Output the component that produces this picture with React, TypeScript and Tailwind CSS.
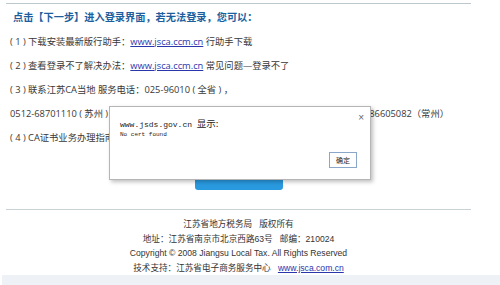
import React from "react";

const body = "font-['Open_Sans','Noto_Sans_CJK_SC',sans-serif]";
const foot = "font-['Liberation_Sans','Noto_Sans_CJK_SC',sans-serif]";

const Link = ({ children }: { children: React.ReactNode }) => (
  <span className="text-[#2b36ad] underline underline-offset-1">{children}</span>
);

const App: React.FC = () => {
  return (
    <div className={`relative w-[500px] h-[285px] overflow-hidden bg-white text-[#383838] ${body}`}>
      {/* Main content */}
      <div className="ml-[6px] mt-[3px] w-[465px] border-t border-[#bcc8cd]">
        <div className="pl-[7px] h-[26px] leading-[26px] text-[10.2px] font-bold text-[#1d5f9e]">
          点击【下一步】进入登录界面，若无法登录，您可以：
        </div>

        <div className="pl-[4px] text-[9.3px] leading-[24px] flex flex-col">
          <div className="h-[24px]">
            ( 1 ) 下载安装最新版行助手：<Link>www.jsca.ccm.cn</Link> 行助手下载
          </div>
          <div className="h-[24px]">
            ( 2 ) 查看登录不了解决办法：<Link>www.jsca.ccm.cn</Link> 常见问题—登录不了
          </div>
          <div className="h-[24px]">( 3 ) 联系江苏CA当地 服务电话：025-96010 ( 全省 ) ，</div>
          <div className="h-[24px] w-[439px] flex justify-between whitespace-nowrap">
            <span>0512-68701110 ( 苏州 )</span>
            <span>0510-82750876 ( 无锡 )&nbsp;&nbsp;0519-86605082（常州）</span>
          </div>
          <div className="h-[24px]">( 4 ) CA证书业务办理指南</div>
        </div>

        {/* Next button (mostly hidden by dialog) */}
        <div className="flex justify-center pt-[18px]">
          <div className="w-[88px] h-[22px] rounded-[3px] bg-[#2a9ae0]"></div>
        </div>

        <div className="mt-[19px] border-t border-[#c9d2d6]"></div>

        {/* Footer */}
        <div className={`pt-[7px] flex flex-col items-center text-[8.6px] leading-[14.6px] text-[#333] ${foot}`}>
          <div>江苏省地方税务局&nbsp;&nbsp;&nbsp;版权所有</div>
          <div>地址：江苏省南京市北京西路63号&nbsp;&nbsp;&nbsp;邮编：210024</div>
          <div>Copyright © 2008 Jiangsu Local Tax. All Rights Reserved</div>
          <div>
            技术支持：江苏省电子商务服务中心&nbsp;&nbsp;&nbsp;<Link>www.jsca.com.cn</Link>
          </div>
        </div>
      </div>

      <div className="absolute left-[2px] right-0 top-[275px] h-[10px] bg-[#eef2f6]"></div>

      {/* Alert dialog */}
      <div className="absolute left-[109px] top-[106px] w-[262px] h-[74px] bg-white border border-[#b5b5b5] shadow-[2px_2px_4px_rgba(0,0,0,0.25)] pl-[10px] pr-[13px] pt-[8px] flex flex-col text-[#222]">
        <div className="flex justify-between items-start h-[12px]">
          <div className="leading-[12px] whitespace-nowrap">
            <span className="font-['Liberation_Mono',monospace] text-[8px]">www.jsds.gov.cn </span>
            <span className="font-['Noto_Sans_CJK_SC',sans-serif] text-[9.5px]">显示:</span>
          </div>
          <span className="-mr-[7px] -mt-[3px] text-[10px] leading-[12px] text-[#666] font-['Liberation_Sans',sans-serif]">×</span>
        </div>
        <div className="mt-[4px] leading-[8px] text-[6px] font-['Liberation_Mono',monospace]">No cert found</div>
        <div className="flex justify-end mt-[13px]">
          <div className="w-[28px] h-[16px] border border-[#8aa6c8] bg-white flex items-center justify-center text-[7px] font-['Noto_Sans_CJK_SC',sans-serif]">
            确定
          </div>
        </div>
      </div>
    </div>
  );
};

export default App;
